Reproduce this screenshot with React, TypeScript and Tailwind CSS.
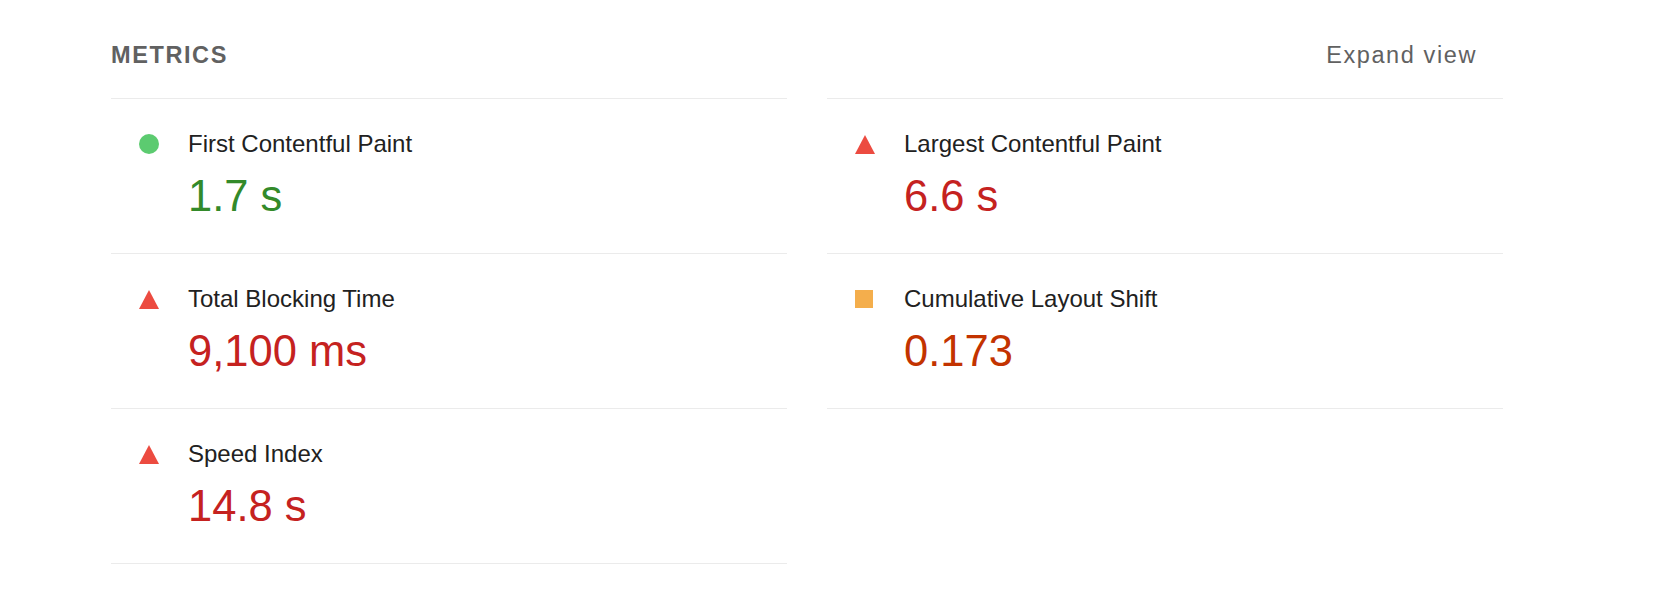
import React from "react";

type Rating = "pass" | "average" | "fail";

const METRICS: { title: string; value: string; rating: Rating }[] = [
  { title: "First Contentful Paint", value: "1.7 s", rating: "pass" },
  { title: "Largest Contentful Paint", value: "6.6 s", rating: "fail" },
  { title: "Total Blocking Time", value: "9,100 ms", rating: "fail" },
  { title: "Cumulative Layout Shift", value: "0.173", rating: "average" },
  { title: "Speed Index", value: "14.8 s", rating: "fail" },
];

const VALUE_COLORS: Record<Rating, string> = {
  pass: "text-[#338a2a]",
  average: "text-[#c33300]",
  fail: "text-[#c5221f]",
};

function ScoreIcon({ rating }: { rating: Rating }) {
  if (rating === "pass") {
    return <span className="block w-[20px] h-[20px] rounded-full bg-[#5ccb70]" />;
  }
  if (rating === "average") {
    return <span className="block w-[18px] h-[18px] bg-[#f4ae4c]" />;
  }
  return (
    <svg width="20" height="19" viewBox="0 0 20 19" className="block">
      <polygon points="10,0 20,19 0,19" fill="#ec4b40" />
    </svg>
  );
}

function MetricRow({
  title,
  value,
  rating,
  first,
}: {
  title: string;
  value: string;
  rating: Rating;
  first: boolean;
}) {
  return (
    <div
      className={`border-b border-[#ebebeb] pt-[25px] pb-[32px] ${first ? "border-t" : ""}`}
    >
      <div className="flex items-center h-[40px]">
        <div className="w-[77px] pl-[28px] flex items-center">
          <ScoreIcon rating={rating} />
        </div>
        <span className="text-[24px] leading-[40px] text-[#212121]">{title}</span>
      </div>
      <div
        className={`mt-[7px] pl-[77px] text-[43.5px] leading-[50px] ${VALUE_COLORS[rating]}`}
      >
        {value}
      </div>
    </div>
  );
}

export default function App() {
  return (
    <div
      className="min-h-[592px] bg-white pt-[35px]"
      style={{ fontFamily: '"Liberation Sans", Arial, sans-serif' }}
    >
      <div className="ml-[111px] w-[1392px]">
        {/* Header */}
        <div className="flex items-center justify-between h-[40px] leading-[40px] text-[23.5px] tracking-[1.6px] text-[#616161]">
          <h2 className="font-bold uppercase">Metrics</h2>
          <button className="mr-[26px] leading-[40px]">Expand view</button>
        </div>

        {/* Metrics grid */}
        <div className="mt-[23px] grid grid-cols-2 gap-x-[40px] items-start">
          {METRICS.map((m, i) => (
            <MetricRow key={m.title} {...m} first={i < 2} />
          ))}
        </div>
      </div>
    </div>
  );
}
